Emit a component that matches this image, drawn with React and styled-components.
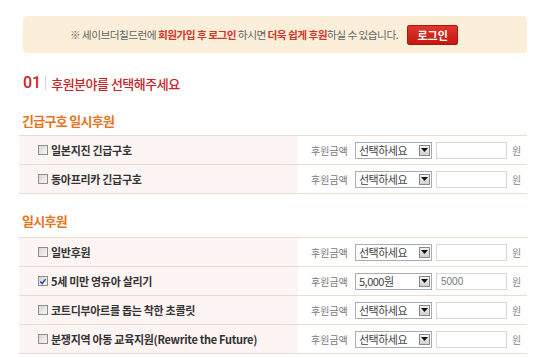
import React from 'react';
import styled, { createGlobalStyle } from 'styled-components';

const GlobalStyle = createGlobalStyle`
  body {
    margin: 0;
    background: #fff;
    font-family: "Noto Sans CJK KR", "Noto Sans", sans-serif;
  }
`;

const sections = [
  {
    title: '긴급구호 일시후원',
    top: 22,
    bottom: 6,
    items: [
      { name: '일본지진 긴급구호' },
      { name: '동아프리카 긴급구호' },
    ],
  },
  {
    title: '일시후원',
    top: 19,
    bottom: 8,
    items: [
      { name: '일반후원' },
      { name: '5세 미만 영유아 살리기', checked: true, amount: '5,000원', value: '5000' },
      { name: '코트디부아르를 돕는 착한 초콜릿' },
      { name: '분쟁지역 아동 교육지원(Rewrite the Future)' },
    ],
  },
];

export default function App() {
  return (
    <>
      <GlobalStyle />
      <Page>
        <Notice>
          <NoticeText>
            ※ 세이브더칠드런에 <Em>회원가입 후 로그인</Em> 하시면 <Em>더욱 쉽게 후원</Em>하실 수 있습니다.
          </NoticeText>
          <LoginButton>로그인</LoginButton>
        </Notice>

        <StepTitle>
          <StepNum>01</StepNum>
          <StepText>후원분야를 선택해주세요</StepText>
        </StepTitle>

        {sections.map((section) => (
          <div key={section.title}>
            <Heading $top={section.top} $bottom={section.bottom}>
              {section.title}
            </Heading>
            <Table>
              {section.items.map((item) => (
                <Row key={item.name}>
                  <NameCell>
                    <Check $checked={item.checked}>
                      {item.checked && (
                        <svg width='9' height='9' viewBox='0 0 9 9'>
                          <path d='M1.5 4.5 L3.5 6.8 L7.5 1.8' fill='none' stroke='#2a3fae' strokeWidth='1.6' />
                        </svg>
                      )}
                    </Check>
                    <Name>{item.name}</Name>
                  </NameCell>
                  <AmountCell>
                    <Label>후원금액</Label>
                    <Select>
                      <SelectValue>{item.amount || '선택하세요'}</SelectValue>
                      <Arrow>
                        <svg width='7' height='4' viewBox='0 0 7 4'>
                          <path d='M0 0 H7 L3.5 4 Z' fill='#111' />
                        </svg>
                      </Arrow>
                    </Select>
                    <Input readOnly value={item.value || ''} />
                    <Unit>원</Unit>
                  </AmountCell>
                </Row>
              ))}
            </Table>
          </div>
        ))}
      </Page>
    </>
  );
}

const Page = styled.div`
  width: 550px;
  box-sizing: border-box;
  padding: 16px 23px 0 19px;
`;

const Notice = styled.div`
  margin-left: 4px;
  height: 37px;
  border-radius: 4px;
  background: #fcefd9;
  display: flex;
  align-items: center;
  justify-content: center;
  padding-right: 22px;
  gap: 9px;
`;

const NoticeText = styled.span`
  font-size: 10.7px;
  letter-spacing: -0.55px;
  color: #666;
`;

const Em = styled.b`
  color: #d2352b;
  font-weight: 700;
`;

const LoginButton = styled.button`
  all: unset;
  width: 51px;
  height: 20px;
  box-sizing: border-box;
  border: 1px solid #b3150e;
  border-radius: 2px;
  background: linear-gradient(#e0362a, #c3170f);
  color: #fff;
  font-size: 11px;
  font-weight: 700;
  text-align: center;
  line-height: 18px;
`;

const StepTitle = styled.div`
  margin: 22px 0 0 4px;
  display: flex;
  align-items: center;
  height: 16px;
`;

const StepNum = styled.span`
  font-family: "Roboto", sans-serif;
  font-size: 16px;
  font-weight: 500;
  color: #c8232b;
  padding-right: 4px;
  margin-right: 5px;
  border-right: 1px solid #d8d8d8;
  line-height: 14px;
`;

const StepText = styled.span`
  font-size: 13px;
  font-weight: 500;
  letter-spacing: -0.5px;
  color: #c8232b;
`;

const Heading = styled.h3`
  margin: ${(p) => p.$top}px 0 ${(p) => p.$bottom}px 3px;
  height: 16px;
  line-height: 16px;
  font-size: 13px;
  font-weight: 700;
  letter-spacing: -0.7px;
  color: #e8731c;
`;

const Table = styled.div`
  width: 508px;
  border-bottom: 1px solid #ecdccb;
`;

const Row = styled.div`
  display: grid;
  grid-template-columns: 279px 1fr;
  height: 29px;
  box-sizing: border-box;
  border-top: 1px solid #ecdccb;
`;

const NameCell = styled.div`
  background: #fdf5f4;
  display: flex;
  align-items: center;
  padding-left: 19px;
`;

const Check = styled.span`
  width: 10px;
  height: 10px;
  box-sizing: border-box;
  border: 1px solid #8e8e8e;
  background: linear-gradient(135deg, #d6d6d6, #f8f8f8);
  display: flex;
  align-items: center;
  justify-content: center;
  margin-right: 3px;
  svg {
    display: block;
  }
`;

const Name = styled.span`
  font-size: 11px;
  font-weight: 700;
  letter-spacing: -0.3px;
  color: #333;
`;

const AmountCell = styled.div`
  display: flex;
  align-items: center;
  padding-left: 13px;
`;

const Label = styled.span`
  font-size: 10px;
  color: #7a7a7a;
  width: 44px;
`;

const Select = styled.div`
  width: 77px;
  height: 17px;
  box-sizing: border-box;
  border: 1px solid #a5acb2;
  display: flex;
  align-items: center;
  padding: 0 1px 0 3px;
`;

const SelectValue = styled.span`
  flex: 1;
  font-size: 11px;
  letter-spacing: -0.5px;
  color: #444;
  line-height: 15px;
`;

const Arrow = styled.span`
  width: 11px;
  height: 11px;
  box-sizing: border-box;
  border: 1px solid #888;
  background: linear-gradient(#f4f4f4, #cfcfcf);
  display: flex;
  align-items: center;
  justify-content: center;
`;

const Input = styled.input`
  width: 71px;
  height: 17px;
  box-sizing: border-box;
  margin: 0 0 0 4px;
  border: 1px solid #d8d8d8;
  padding: 0 4px;
  font-family: "Liberation Sans", sans-serif;
  font-size: 10px;
  color: #777;
  outline: none;
`;

const Unit = styled.span`
  margin-left: 5px;
  font-size: 10px;
  color: #888;
`;
